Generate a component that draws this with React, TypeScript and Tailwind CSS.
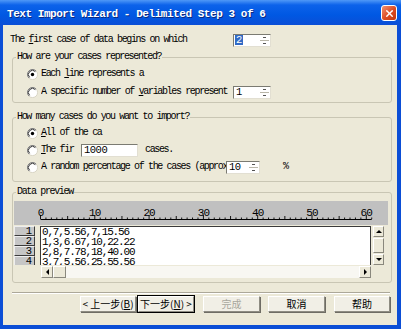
import { X } from "lucide-react";
import type { ReactNode } from "react";

const Radio = ({ checked }: { checked?: boolean }) => (
  <svg width="11" height="11" viewBox="0 0 11 11" className="shrink-0">
    <circle cx="5.5" cy="5.5" r="5" fill="#fff" />
    <path d="M1.9 9.1 A5 5 0 0 1 9.1 1.9" fill="none" stroke="#808080" />
    <path d="M2.6 8.4 A4 4 0 0 1 8.4 2.6" fill="none" stroke="#303030" />
    <path d="M9.1 1.9 A5 5 0 0 1 1.9 9.1" fill="none" stroke="#d8d5c6" />
    {checked && <circle cx="5.5" cy="5.5" r="1.7" fill="#000" />}
  </svg>
);

const Tri = ({ dir }: { dir: "up" | "down" | "left" | "right" }) => {
  const pts = {
    up: "1,4 7,4 4,1",
    down: "1,1 7,1 4,4",
    left: "4,1 4,7 1,4",
    right: "1,1 1,7 4,4",
  }[dir];
  const wide = dir === "up" || dir === "down";
  return (
    <svg width={wide ? 8 : 5} height={wide ? 5 : 8} viewBox={wide ? "0 0 8 5" : "0 0 5 8"}>
      <polygon points={pts} fill="#000" />
    </svg>
  );
};

// spin box with tiny up/down buttons
const Spin = ({ value, width, selected }: { value: string; width: string; selected?: boolean }) => (
  <div className={`${width} h-[13px] shrink-0 flex bg-white border border-t-[#7b7b72] border-l-[#7b7b72] border-r-[#e2dfd2] border-b-[#e2dfd2]`}>
    <div className="flex-1 flex items-center pl-[1px] text-[10.5px] tracking-[-0.5px] leading-none">
      <span className={selected ? "bg-[#316AC5] text-white px-[1px]" : "px-[1px]"}>{value}</span>
    </div>
    <div className="w-[9px] flex flex-col mr-[1px]">
      <div className="flex-1 flex items-center justify-center border-b border-[#b9b6a8]">
        <div className="w-[3px] h-[1px] bg-[#555]" />
      </div>
      <div className="flex-1 flex items-center justify-center">
        <div className="w-[3px] h-[1px] bg-[#555]" />
      </div>
    </div>
  </div>
);

const ScrollBtn = ({ children, className }: { children?: ReactNode; className: string }) => (
  <div className={`${className} shrink-0 flex items-center justify-center bg-[#ECE9D8] border border-t-white border-l-white border-r-[#8a887d] border-b-[#8a887d]`}>
    {children}
  </div>
);

const Btn = ({ children, width, def, disabled }: { children: ReactNode; width: string; def?: boolean; disabled?: boolean }) => (
  <div
    className={`${width} h-[16px] shrink-0 flex items-center justify-center bg-[#F1EFE6] border border-t-white border-l-white border-r-[#8e8c82] border-b-[#8e8c82] shadow-[1px_1px_0_#6e6c64] font-['Noto_Sans_CJK_SC',sans-serif] text-[10px] tracking-normal leading-none ${def ? "outline outline-1 outline-black" : ""} ${disabled ? "text-[#a8a79d]" : "text-black"}`}
  >
    {children}
  </div>
);

const Ruler = () => {
  const step = 5.43;
  const x0 = 26.5;
  const ticks = [];
  for (let i = 0; i <= 61; i++) {
    const x = x0 + i * step;
    const h = i % 10 === 0 ? 4 : i % 5 === 0 ? 3 : 1.5;
    ticks.push(<line key={i} x1={x} x2={x} y1={18} y2={18 - h} stroke="#000" strokeWidth="0.9" />);
  }
  return (
    <svg width="374" height="24" className="block">
      {[0, 10, 20, 30, 40, 50, 60].map((n) => (
        <text key={n} x={x0 + n * step} y={14.5} textAnchor="middle" fontSize="11" fontFamily="Liberation Mono, monospace" letterSpacing="-0.9">
          {n}
        </text>
      ))}
      <line x1={x0} x2={x0 + 61 * step} y1={18.5} y2={18.5} stroke="#000" />
      {ticks}
    </svg>
  );
};

const rows = ["0,7,5.56,7,15.56", "1,3,6.67,10,22.22", "2,8,7.78,18,40.00", "3,7,5.56,25,55.56"];

export default function App() {
  return (
    <div className="w-[401px] h-[329px] overflow-hidden bg-[#0B4ED6] flex flex-col font-['Liberation_Mono',monospace] text-black">
      {/* title bar */}
      <div className="h-[25px] shrink-0 flex items-center pl-[7px] pr-[4px] bg-[linear-gradient(to_bottom,#4f98f7,#0c62ea_20%,#0058e3_60%,#0b4ed6)]">
        <span className="text-white font-bold text-[11px] tracking-[-0.45px] pt-[3px] [text-shadow:1px_1px_0_#0a2a80]">Text Import Wizard - Delimited Step 3 of 6</span>
        <div className="ml-auto mt-[1px] w-[16px] h-[16px] rounded-[3px] border border-white bg-[linear-gradient(135deg,#f29272,#dc4a22_55%,#c2380f)] flex items-center justify-center">
          <X size={11} strokeWidth={3} color="#fff" />
        </div>
      </div>

      {/* body */}
      <div className="flex-1 ml-[3px] mr-[4px] mb-[4px] bg-[#ECE9D8] flex flex-col text-[10px] tracking-[-1.35px] leading-[12px]">
        <div className="mt-[8px] ml-[7px] h-[14px] flex items-center">
          <span className="w-[223px] whitespace-nowrap">
            The <u>f</u>irst case of data begins on which
          </span>
          <Spin value="2" width="w-[38px]" selected />
        </div>

        {/* group 1 */}
        <fieldset className="mt-[4px] ml-[9px] w-[380px] border border-[#C9C6B4] rounded-[3px] px-0 pt-[4px] pb-[3px]">
          <legend className="ml-[3px] px-[1px] h-[12px] leading-[12px] whitespace-nowrap">How are your cases represented?</legend>
          <div className="flex flex-col gap-[4px] pl-[14px]">
            <div className="h-[14px] flex items-center gap-[3px]">
              <Radio checked />
              <span className="whitespace-nowrap">
                Each <u>l</u>ine represents a
              </span>
            </div>
            <div className="h-[14px] flex items-center gap-[3px]">
              <Radio />
              <span className="w-[189px] overflow-hidden whitespace-nowrap">
                A specific number of <u>v</u>ariables represent
              </span>
              <Spin value="1" width="w-[38px]" />
            </div>
          </div>
        </fieldset>

        {/* group 2 */}
        <fieldset className="mt-[8px] ml-[9px] w-[380px] border border-[#C9C6B4] rounded-[3px] px-0 pt-[3px] pb-[7px]">
          <legend className="ml-[3px] px-[1px] h-[12px] leading-[12px] whitespace-nowrap">How many cases do you want to import?</legend>
          <div className="flex flex-col gap-[3px] pl-[14px]">
            <div className="h-[14px] flex items-center gap-[3px]">
              <Radio checked />
              <span className="whitespace-nowrap">
                <u>A</u>ll of the ca
              </span>
            </div>
            <div className="h-[14px] flex items-center gap-[3px]">
              <Radio />
              <span className="w-[37px] overflow-hidden whitespace-nowrap">
                <u>T</u>he fir
              </span>
              <div className="w-[57px] h-[13px] shrink-0 flex items-center pl-[2px] bg-white border border-t-[#7b7b72] border-l-[#7b7b72] border-r-[#e2dfd2] border-b-[#e2dfd2] text-[10.5px] tracking-[-0.5px]">
                1000
              </div>
              <span className="ml-[4px] whitespace-nowrap">cases.</span>
            </div>
            <div className="h-[14px] flex items-center gap-[3px]">
              <Radio />
              <span className="w-[186px] overflow-hidden whitespace-nowrap">
                A random <u>p</u>ercentage of the cases (approx
              </span>
              <div className="-ml-[4px]">
                <Spin value="10" width="w-[34px]" />
              </div>
              <span className="ml-[20px]">%</span>
            </div>
          </div>
        </fieldset>

        {/* group 3 */}
        <fieldset className="mt-[4px] ml-[9px] w-[380px] border border-[#C9C6B4] rounded-[3px] pl-[1px] pr-[3px] pt-[3px] pb-[4px]">
          <legend className="ml-[2px] px-[1px] h-[12px] leading-[12px] whitespace-nowrap">Data preview</legend>
          <div className="h-[24px] bg-[#C0C0C0]">
            <Ruler />
          </div>
          <div className="mt-[1px] h-[39px] flex">
            <div className="w-[21px] h-[39px] overflow-hidden flex flex-col">
              {[1, 2, 3, 4].map((n) => (
                <div key={n} className="h-[10px] shrink-0 flex items-center justify-end bg-[#C6C6C6] border border-t-[#eee] border-l-[#eee] border-r-[#3c3c3c] border-b-[#3c3c3c] pr-[2px] text-[10.5px] tracking-normal leading-none">
                  {n}
                </div>
              ))}
            </div>
            <div className="ml-[5px] w-[331px] h-[39px] overflow-hidden bg-white border-l border-t border-r border-[#3a3a3a] pl-[1px] text-[11px] tracking-[-1.17px] leading-[10px]">
              {rows.map((r) => (
                <div key={r} className="h-[10px] whitespace-nowrap">
                  {r}
                </div>
              ))}
            </div>
            <div className="ml-[2px] w-[11px] flex flex-col">
              <ScrollBtn className="h-[11px]">
                <Tri dir="up" />
              </ScrollBtn>
              <div className="flex-1 py-[1px]">
                <ScrollBtn className="h-full" />
              </div>
              <ScrollBtn className="h-[11px]">
                <Tri dir="down" />
              </ScrollBtn>
            </div>
          </div>
          <div className="mt-[1px] ml-[27px] w-[330px] h-[12px] flex bg-[#F8F7F2]">
            <ScrollBtn className="w-[12px]">
              <Tri dir="left" />
            </ScrollBtn>
            <ScrollBtn className="w-[13px]" />
            <div className="flex-1" />
            <ScrollBtn className="w-[12px]">
              <Tri dir="right" />
            </ScrollBtn>
          </div>
        </fieldset>

        {/* separator */}
        <div className="mt-[9px] ml-[9px] w-[378px] h-[2px] border-t border-[#ACA899] border-b border-b-white" />

        {/* buttons */}
        <div className="mt-[2px] ml-[77px] flex">
          <Btn width="w-[56px]">
            &lt; 上一步(<u>B</u>)
          </Btn>
          <div className="ml-[2px]">
            <Btn width="w-[56px]" def>
              下一步(<u>N</u>) &gt;
            </Btn>
          </div>
          <div className="ml-[9px]">
            <Btn width="w-[57px]" disabled>
              完成
            </Btn>
          </div>
          <div className="ml-[8px]">
            <Btn width="w-[57px]">取消</Btn>
          </div>
          <div className="ml-[9px]">
            <Btn width="w-[56px]">帮助</Btn>
          </div>
        </div>
      </div>
    </div>
  );
}
